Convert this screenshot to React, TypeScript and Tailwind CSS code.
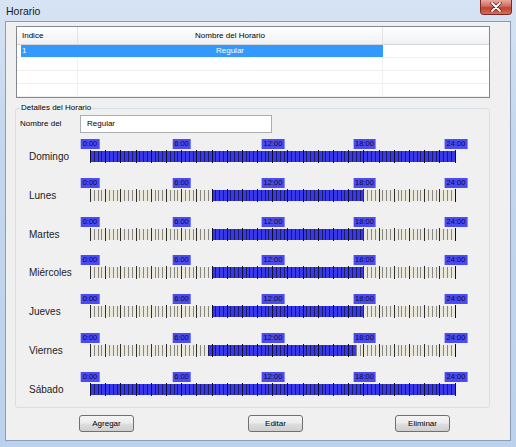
import React from "react";

type Day = { name: string; s: number; e: number };

const DAYS: Day[] = [
  { name: "Domingo", s: 0, e: 24 },
  { name: "Lunes", s: 8, e: 18 },
  { name: "Martes", s: 8, e: 18 },
  { name: "Miércoles", s: 8, e: 18 },
  { name: "Jueves", s: 8, e: 18 },
  { name: "Viernes", s: 7.75, e: 17.5 },
  { name: "Sábado", s: 0, e: 24 },
];

const LABELS = [
  { t: "0:00", c: "left-0" },
  { t: "6:00", c: "left-1/4" },
  { t: "12:00", c: "left-1/2" },
  { t: "18:00", c: "left-3/4" },
  { t: "24:00", c: "left-full" },
];

function Timeline({ s, e }: { s: number; e: number }) {
  const slots = Array.from({ length: 96 }, (_, i) => i);
  return (
    <div className="flex flex-col w-[366px]">
      <div className="relative h-[10px] w-[366px]">
        {LABELS.map((l) => (
          <div
            key={l.t}
            className={`absolute top-0 ${l.c} -translate-x-1/2 h-[10px] px-[2px] bg-[#4b4bf0] text-[#0c0c30] text-[7.5px] leading-[10px]`}
          >
            {l.t}
          </div>
        ))}
      </div>
      <div className="flex items-start h-[13px] mt-px">
        {slots.map((i) => {
          const on = i >= s * 4 && i < e * 4;
          const hour = i % 4 === 0;
          let cls = "flex-1 border-l ";
          cls += hour ? "h-[13px] py-px bg-clip-content " : "h-[11px] mt-px ";
          if (on) {
            cls += "bg-[#3838e8] ";
            cls += hour ? "border-[#0d0d2a]" : "border-[#1a1a6a]";
          } else {
            cls += "bg-[#ebe9de] ";
            cls += hour ? "border-[#2e2e2e]" : "border-[#858585]";
          }
          return <div key={i} className={cls} />;
        })}
        <div className="w-px h-[13px] bg-[#111]" />
      </div>
    </div>
  );
}

function Btn({ label, className }: { label: string; className: string }) {
  return (
    <div
      className={`w-[55px] h-[17px] flex items-center justify-center rounded-[3px] border border-[#707070] bg-[linear-gradient(to_bottom,#f4f4f4,#ececec_45%,#dddddd_55%,#cfcfcf)] text-[8px] text-black ${className}`}
    >
      {label}
    </div>
  );
}

export default function App() {
  return (
    <div
      className="w-[516px] h-[447px] flex flex-col bg-[linear-gradient(to_bottom,#d6e4f4,#c4d7ee_30%,#bcd1eb)] overflow-hidden"
      style={{ fontFamily: '"Liberation Sans", Arial, sans-serif' }}
    >
      {/* Title bar */}
      <div className="h-[21px] flex justify-between shrink-0">
        <div className="pl-[6px] pt-[4px] text-[10.5px] text-[#1b1b1b]">Horario</div>
        <div className="mr-[4px] w-[32px] h-[15px] rounded-b-[4px] border border-t-0 border-[#7b2a22] bg-[linear-gradient(to_bottom,#e9a89e,#d26a5c_45%,#c2402f_55%,#d2705e)] flex items-center justify-center">
          <svg width="12" height="10" viewBox="0 0 12 10">
            <path d="M2 1 L10 9 M10 1 L2 9" stroke="#5a1a14" strokeWidth="3.2" strokeLinecap="round" />
            <path d="M2 1 L10 9 M10 1 L2 9" stroke="#ffffff" strokeWidth="1.8" strokeLinecap="round" />
          </svg>
        </div>
      </div>

      {/* Client area */}
      <div className="ml-[5px] w-[506px] h-[420px] border border-[#8c9cb4] bg-[#f0f0f0] pl-[10px] pt-[4px] text-[8px] text-black">
        {/* Table */}
        <div className="w-[474px] h-[72px] border border-[#828790] bg-white flex flex-col">
          <div className="flex h-[18px] border-b border-[#d5d5d5] bg-[linear-gradient(to_bottom,#ffffff,#f7f8fa_50%,#f0f1f4)]">
            <div className="w-[61px] border-r border-[#e1e4e8] pl-[5px] flex items-center">Indice</div>
            <div className="w-[305px] border-r border-[#e1e4e8] flex items-center justify-center">Nombre del Horario</div>
            <div className="flex-1" />
          </div>
          <div className="flex h-[13px] border-b border-[#f0f0f0]">
            <div className="w-[61px] pl-[4px] flex">
              <div className="flex-1 bg-[#3399ff] text-white pl-[1px] flex items-center">1</div>
            </div>
            <div className="w-[305px] bg-[#3399ff] text-white flex items-center justify-center border-r border-[#3399ff]">Regular</div>
            <div className="flex-1" />
          </div>
          {[0, 1, 2].map((r) => (
            <div key={r} className="flex h-[13px] border-b border-[#f0f0f0]">
              <div className="w-[61px] border-r border-[#f0f0f0]" />
              <div className="w-[305px] border-r border-[#f0f0f0]" />
              <div className="flex-1" />
            </div>
          ))}
        </div>

        {/* Group box */}
        <div className="relative mt-[10px] -ml-px w-[475px] h-[300px] border border-[#d5dfe5] rounded-[3px] pl-[4px] pt-[6px]">
          <div className="absolute -top-[6px] left-[4px] px-px bg-[#f0f0f0] leading-[10px]">Detalles del Horario</div>
          <div className="flex items-center h-[18px]">
            <div className="w-[60px]">Nombre del</div>
            <div className="w-[192px] h-[18px] bg-white border border-[#abadb3] flex items-center pl-[6px]">Regular</div>
          </div>
          <div className="flex flex-col mt-[6px] gap-[14.8px]">
            {DAYS.map((d) => (
              <div key={d.name} className="flex items-end ml-[9px]">
                <div className="w-[61px] h-[13px] flex items-center text-[10px] text-[#222]">{d.name}</div>
                <Timeline s={d.s} e={d.e} />
              </div>
            ))}
          </div>
        </div>

        {/* Buttons */}
        <div className="flex mt-[7px]">
          <Btn label="Agregar" className="ml-[63px]" />
          <Btn label="Editar" className="ml-[114px]" />
          <Btn label="Eliminar" className="ml-[92px]" />
        </div>
      </div>
    </div>
  );
}
